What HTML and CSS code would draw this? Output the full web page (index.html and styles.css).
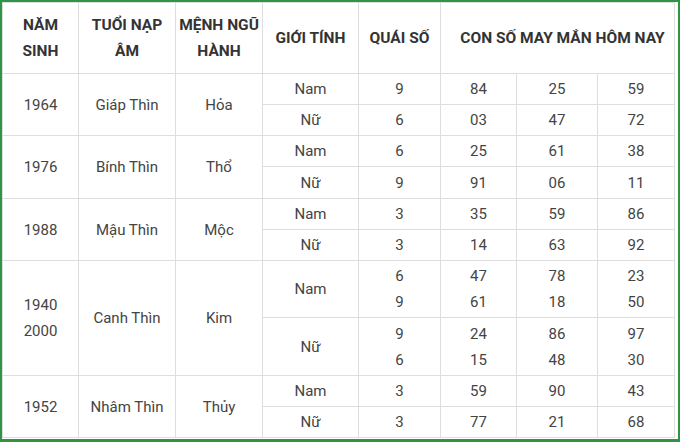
FILE: index.html
```html
<!DOCTYPE html>
<html lang="vi">
<head>
<meta charset="utf-8">
<link rel="stylesheet" href="styles.css">
</head>
<body>
<div class="frame">
<table class="grid">
  <colgroup>
    <col class="c-year"><col class="c-tuoi"><col class="c-menh"><col class="c-gt"><col class="c-qs"><col class="c-n1"><col class="c-n2"><col class="c-n3">
  </colgroup>
  <thead>
    <tr class="r-head">
      <th>NĂM<br>SINH</th>
      <th>TUỔI NẠP<br>ÂM</th>
      <th>MỆNH NGŨ<br>HÀNH</th>
      <th>GIỚI TÍNH</th>
      <th>QUÁI SỐ</th>
      <th colspan="3" class="h-lucky">CON SỐ MAY MẮN HÔM NAY</th>
    </tr>
  </thead>
  <tbody>
    <tr class="r1"><td rowspan="2">1964</td><td rowspan="2">Giáp Thìn</td><td rowspan="2">Hỏa</td><td>Nam</td><td>9</td><td>84</td><td>25</td><td>59</td></tr>
    <tr class="r1"><td>Nữ</td><td>6</td><td>03</td><td>47</td><td>72</td></tr>
    <tr class="r1"><td rowspan="2">1976</td><td rowspan="2">Bính Thìn</td><td rowspan="2">Thổ</td><td>Nam</td><td>6</td><td>25</td><td>61</td><td>38</td></tr>
    <tr class="r1b"><td>Nữ</td><td>9</td><td>91</td><td>06</td><td>11</td></tr>
    <tr class="r1"><td rowspan="2">1988</td><td rowspan="2">Mậu Thìn</td><td rowspan="2">Mộc</td><td>Nam</td><td>3</td><td>35</td><td>59</td><td>86</td></tr>
    <tr class="r1"><td>Nữ</td><td>3</td><td>14</td><td>63</td><td>92</td></tr>
    <tr class="r2"><td rowspan="2">1940<br>2000</td><td rowspan="2">Canh Thìn</td><td rowspan="2">Kim</td><td>Nam</td><td>6<br>9</td><td>47<br>61</td><td>78<br>18</td><td>23<br>50</td></tr>
    <tr class="r2b"><td>Nữ</td><td>9<br>6</td><td>24<br>15</td><td>86<br>48</td><td>97<br>30</td></tr>
    <tr class="r1"><td rowspan="2">1952</td><td rowspan="2">Nhâm Thìn</td><td rowspan="2">Thủy</td><td>Nam</td><td>3</td><td>59</td><td>90</td><td>43</td></tr>
    <tr class="r1"><td>Nữ</td><td>3</td><td>77</td><td>21</td><td>68</td></tr>
  </tbody>
</table>
</div>
</body>
</html>
```
FILE: styles.css
```css
html, body {
  margin: 0;
  padding: 0;
  background: #ffffff;
}
.frame {
  box-sizing: border-box;
  width: 680px;
  height: 442px;
  border: 2px solid #2f9443;
  border-bottom-width: 3px;
  padding: 0 3px 2px 0;
  background: #ffffff;
  overflow: hidden;
}
.grid {
  border-collapse: collapse;
  table-layout: fixed;
  width: 672px;
  font-family: Roboto, "Liberation Sans", sans-serif;
  font-size: 15px;
  line-height: 26px;
  color: #444444;
}
.c-year { width: 76px; }
.c-tuoi { width: 97px; }
.c-menh { width: 87px; }
.c-gt { width: 96px; }
.c-qs { width: 82px; }
.c-n1 { width: 76px; }
.c-n2 { width: 81px; }
.c-n3 { width: 77px; }
.grid th,
.grid td {
  border: 1px solid #dedede;
  padding: 0 2px;
  text-align: center;
  vertical-align: middle;
}
.grid th {
  font-size: 15.5px;
  font-weight: 700;
  color: #333333;
}
.grid .h-lucky {
  padding-left: 12px;
}
.r-head { height: 71px; }
.r1 { height: 31px; }
.r1b { height: 32px; }
.r2 { height: 57px; }
.r2b { height: 58px; }
```
